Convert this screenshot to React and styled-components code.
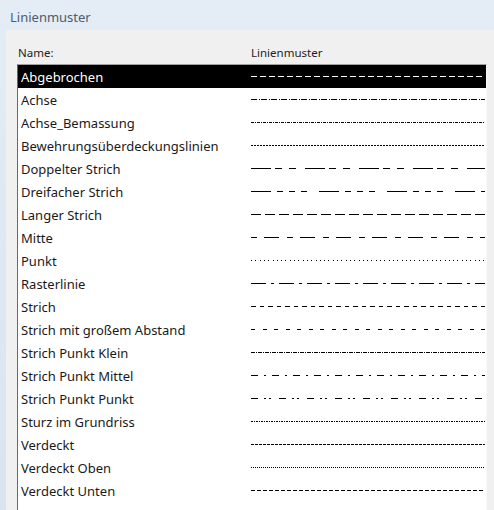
import React from "react";
import styled, { createGlobalStyle } from "styled-components";

const GlobalStyle = createGlobalStyle`
  html, body {
    margin: 0;
    padding: 0;
    height: 100%;
    overflow: hidden;
  }
  body {
    background: linear-gradient(180deg, #e4ecf5 0%, #d9e4ef 100%);
    font-family: "Noto Sans", "Open Sans", sans-serif;
  }
`;

const patterns = [
  { name: "Abgebrochen", dash: "6 3" },
  { name: "Achse", dash: "6 1.5 1 1.5" },
  { name: "Achse_Bemassung", dash: "3 1 1 1" },
  { name: "Bewehrungsüberdeckungslinien", dash: "2 1" },
  { name: "Doppelter Strich", dash: "20 4 7 7 7 9" },
  { name: "Dreifacher Strich", dash: "20 6 6 6 6 6 6 12" },
  { name: "Langer Strich", dash: "10 4" },
  { name: "Mitte", dash: "6 7 15 8" },
  { name: "Punkt", dash: "1 3.3" },
  { name: "Rasterlinie", dash: "15 5 3 5" },
  { name: "Strich", dash: "4.5 4" },
  { name: "Strich mit großem Abstand", dash: "4 7.5" },
  { name: "Strich Punkt Klein", dash: "4 1 1 1" },
  { name: "Strich Punkt Mittel", dash: "7 6 1.5 6.5" },
  { name: "Strich Punkt Punkt", dash: "7 6 1.5 3.5 1.5 8.5" },
  { name: "Sturz im Grundriss", dash: "1.5 1" },
  { name: "Verdeckt", dash: "3 1" },
  { name: "Verdeckt Oben", dash: "1 1" },
  { name: "Verdeckt Unten", dash: "4 2" },
];

const Title = styled.div`
  padding: 8px 0 0 10px;
  height: 22px;
  font-size: 13px;
  line-height: 18px;
  color: #4e5c6b;
`;

const Panel = styled.div`
  margin-left: 6px;
  background: #f0f0f0;
  padding: 16px 0 0 11px;
  height: 480px;
`;

const HeaderRow = styled.div`
  display: grid;
  grid-template-columns: 233px 1fr;
  height: 18px;
  font-size: 11.5px;
  line-height: 14px;
  color: #1e1e1e;
  padding-left: 1px;
`;

const ListBox = styled.div`
  width: 468px;
  background: #ffffff;
  border-top: 1px solid #a0a0a0;
  border-left: 1px solid #696969;
  border-right: 1px solid #fafafa;
  height: 460px;
`;

const Row = styled.div`
  display: grid;
  grid-template-columns: 233px 234px;
  align-items: center;
  height: 23px;
  background: ${(p) => (p.$selected ? "#000000" : "transparent")};
  color: ${(p) => (p.$selected ? "#ffffff" : "#1a1a1a")};
`;

const Name = styled.span`
  padding: 1px 0 0 3px;
  font-size: 13px;
  line-height: 18px;
  white-space: nowrap;
`;

const Pattern = styled.svg`
  display: block;
`;

export default function App() {
  return (
    <>
      <GlobalStyle />
      <Title>Linienmuster</Title>
      <Panel>
        <HeaderRow>
          <span>Name:</span>
          <span>Linienmuster</span>
        </HeaderRow>
        <ListBox>
          {patterns.map((p, i) => (
            <Row key={p.name} $selected={i === 0}>
              <Name>{p.name}</Name>
              <Pattern width="234" height="23" viewBox="0 0 234 23">
                <line
                  x1="0"
                  y1="11.5"
                  x2="234"
                  y2="11.5"
                  stroke={i === 0 ? "#ffffff" : "#000000"}
                  strokeWidth="1"
                  strokeDasharray={p.dash}
                  shapeRendering="crispEdges"
                />
              </Pattern>
            </Row>
          ))}
        </ListBox>
      </Panel>
    </>
  );
}
